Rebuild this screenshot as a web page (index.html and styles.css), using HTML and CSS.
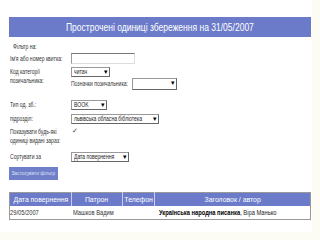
FILE: index.html
```html
<!DOCTYPE html>
<html>
<head>
<meta charset="utf-8">
<link rel="stylesheet" href="styles.css">
</head>
<body>
<div class="page">
  <div class="title"><span class="n t">Прострочені одиниці збереження на 31/05/2007</span></div>
  <div class="form">
    <div class="row r-head"><span class="lbl indent"><span class="n">Фільтр на:</span></span></div>
    <div class="row r-name">
      <span class="lbl"><span class="n">Ім'я або номер квитка:</span></span>
      <span class="input"></span>
    </div>
    <div class="row r-cat">
      <div class="lbl two"><span class="n">Код категорії</span><br><span class="n">позичальника:</span></div>
      <div class="ctrl">
        <span class="sel w40"><span class="n">читач</span><i class="arr">▾</i></span>
        <div class="sub">
          <span class="lbl"><span class="n">Позначки позичальника:</span></span>
          <span class="sel w45 tall"><i class="arr">▾</i></span>
        </div>
      </div>
    </div>
    <div class="row r-type">
      <span class="lbl"><span class="n">Тип од. зб.:</span></span>
      <span class="sel w36"><span class="n">BOOK</span><i class="arr">▾</i></span>
    </div>
    <div class="row r-branch">
      <span class="lbl"><span class="n">підрозділ:</span></span>
      <span class="sel w88"><span class="n">львівська обласна бібліотека</span><i class="arr">▾</i></span>
    </div>
    <div class="row r-show">
      <div class="lbl two"><span class="n">Показувати будь-які</span><br><span class="n">одиниці видані зараз:</span></div>
      <span class="check">✓</span>
    </div>
    <div class="row r-sort">
      <span class="lbl"><span class="n">Сортувати за</span></span>
      <span class="sel w58"><span class="n">Дата повернення</span><i class="arr">▾</i></span>
    </div>
    <div class="row r-btn"><span class="btn"><span class="n b">Застосувати фільтр</span></span></div>
  </div>
  <table class="grid">
    <colgroup><col class="c1"><col class="c2"><col class="c3"><col class="c4"></colgroup>
    <thead>
      <tr>
        <th><div class="hc"><span class="n h">Дата повернення</span></div></th>
        <th><div class="hc"><span class="n h">Патрон</span></div></th>
        <th><div class="hc"><span class="n h">Телефон</span></div></th>
        <th><div class="hc"><span class="n h">Заголовок / автор</span></div></th>
      </tr>
    </thead>
    <tbody>
      <tr>
        <td><span class="n d">29/05/2007</span></td>
        <td class="pat"><span class="n d">Машков Вадим</span></td>
        <td></td>
        <td class="ttl"><span class="n d"><b>Українська народна писанка</b>, Віра Манько</span></td>
      </tr>
    </tbody>
  </table>
</div>
</body>
</html>
```
FILE: styles.css
```css
html, body {
  margin: 0;
  padding: 0;
  background: #fcfcf5;
}
body {
  width: 320px;
  height: 240px;
  overflow: hidden;
  font-family: "Liberation Sans", Arial, sans-serif;
}
.page {
  width: 312px;
  height: 232px;
  background: #ffffff;
  padding-top: 17px;
  box-sizing: border-box;
}
.n {
  display: inline-block;
  white-space: nowrap;
  transform: scaleX(0.72);
  transform-origin: 0 50%;
}
.title {
  margin-left: 9px;
  width: 302px;
  height: 20px;
  background: #6b7bc9;
  color: #ffffff;
  font-size: 11.5px;
  line-height: 20px;
  display: flex;
  justify-content: center;
}
.n.t {
  transform: scaleX(0.74);
  transform-origin: 50% 50%;
}
.form {
  margin-left: 10px;
  padding-top: 6px;
  color: #333333;
}
.row {
  display: flex;
  align-items: flex-start;
}
.lbl {
  font-size: 7px;
  line-height: 8px;
  white-space: nowrap;
}
.row > .lbl {
  width: 61px;
  flex: none;
}
.indent { padding-left: 3px; }
.r-head { height: 9px; }
.r-name { height: 13px; align-items: center; }
.input {
  width: 62px;
  height: 9px;
  border-top: 1px solid #777;
  border-left: 1px solid #999;
  border-right: 1px solid #ddd;
  border-bottom: 1px solid #ddd;
}
.r-cat { height: 30px; padding-top: 2px; }
.two { line-height: 9px; }
.ctrl { display: flex; flex-direction: column; }
.sub { display: flex; align-items: center; margin-top: 1px; }
.sub .lbl { width: 61px; }
.sel {
  position: relative;
  height: 10px;
  box-sizing: border-box;
  border: 1px solid #999;
  border-right-color: #666;
  border-bottom-color: #666;
  font-size: 7px;
  line-height: 8px;
  padding-left: 2px;
  color: #222;
  white-space: nowrap;
  background: #fff;
}
.arr {
  position: absolute;
  right: 1px;
  top: 0;
  font-style: normal;
  font-size: 7px;
  line-height: 8px;
  color: #000;
}
.w40 { width: 39px; }
.w45 { width: 45px; }
.tall { height: 12px; }
.w36 { width: 36px; }
.w88 { width: 88px; }
.w58 { width: 58px; }
.r-type { height: 15px; align-items: center; }
.r-branch { height: 13px; align-items: center; }
.r-show { height: 21px; padding-top: 2px; }
.check {
  font-size: 7px;
  line-height: 7px;
  color: #444;
  padding-left: 1px;
}
.r-sort { height: 17px; align-items: center; }
.r-btn { height: 25px; padding-top: 2px; margin-left: -1px; }
.btn {
  display: flex;
  justify-content: center;
  width: 49px;
  height: 13px;
  background: #6f7fca;
  color: #dde1f5;
  font-size: 6px;
  line-height: 13px;
}
.n.b {
  transform: scaleX(0.8);
  transform-origin: 50% 50%;
}
.grid {
  margin-left: 9px;
  width: 302px;
  table-layout: fixed;
  border-collapse: collapse;
  border: 1px solid #999;
  font-size: 8px;
}
.c1 { width: 62px; }
.c2 { width: 51px; }
.c3 { width: 32px; }
.grid th {
  background: #6b7bc9;
  color: #ffffff;
  font-weight: normal;
  height: 13px;
  padding: 0;
  border-right: 1px solid #c8cdee;
}
.grid th:last-child { border-right: none; }
.hc {
  display: flex;
  justify-content: center;
  line-height: 13px;
}
.n.h {
  transform: scaleX(0.86);
  transform-origin: 50% 50%;
}
.grid td {
  height: 13px;
  padding: 0;
  color: #333;
  white-space: nowrap;
  overflow: visible;
  line-height: 13px;
}
.grid td.pat { padding-left: 1px; }
.grid td.ttl { padding-left: 4px; color: #222; }
.grid td b { color: #000; }
```
